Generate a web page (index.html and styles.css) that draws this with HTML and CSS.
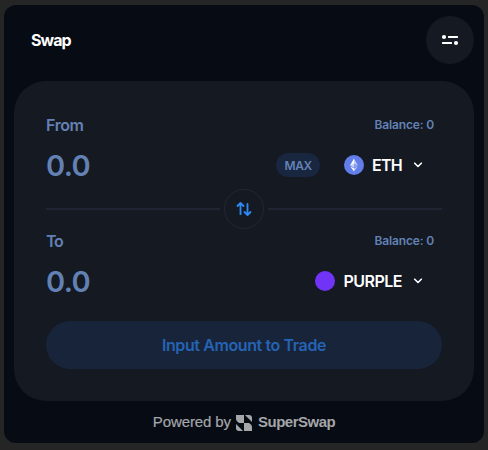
FILE: index.html
```html
<!DOCTYPE html>
<html lang="en">
<head>
    <meta charset="UTF-8">
    <meta name="viewport" content="width=device-width, initial-scale=1.0">
    <title>Swap</title>
    <link rel="stylesheet" href="styles.css">
</head>
<body>
    <div class="widget">
        <div class="header">
            <h1>Swap</h1>
            <button class="settings" aria-label="Settings">
                <svg width="18" height="12" viewBox="0 0 18 12" fill="#fff">
                    <circle cx="3" cy="3" r="2.1"/>
                    <rect x="7" y="2" width="10" height="2" rx="0.5"/>
                    <rect x="1" y="8" width="10" height="2" rx="0.5"/>
                    <circle cx="15" cy="9" r="2.1"/>
                </svg>
            </button>
        </div>

        <div class="panel">
            <div class="label-row">
                <span class="label">From</span>
                <span class="balance">Balance: 0</span>
            </div>
            <div class="amount-row">
                <span class="amount">0.0</span>
                <button class="max">MAX</button>
                <button class="token">
                    <svg class="token-icon" width="20" height="20" viewBox="0 0 20 20">
                        <circle cx="10" cy="10" r="10" fill="#627eea"/>
                        <path d="M10 3.6L6.2 10.2L10 12.4Z" fill="#fff"/>
                        <path d="M10 3.6L13.8 10.2L10 12.4Z" fill="#c3cef8"/>
                        <path d="M10 8.4L6.2 10.2L10 12.4Z" fill="#c3cef8"/>
                        <path d="M10 8.4L13.8 10.2L10 12.4Z" fill="#8a9ff0"/>
                        <path d="M6.2 11.2L10 13.4V16.5Z" fill="#fff"/>
                        <path d="M13.8 11.2L10 13.4V16.5Z" fill="#c3cef8"/>
                    </svg>
                    <span class="token-name eth">ETH</span>
                    <svg class="chevron" width="10" height="8" viewBox="0 0 10 8">
                        <path d="M1.7 2.2L5 5.5L8.3 2.2"/>
                    </svg>
                </button>
            </div>

            <div class="divider">
                <button class="switch" aria-label="Switch tokens">
                    <svg width="16" height="16" viewBox="0 0 16 16">
                        <path d="M4.5 13.2V2.4M1.5 5L4.5 2L7.5 5"/>
                        <path d="M11.5 3V13.6M8.5 11L11.5 14L14.5 11"/>
                    </svg>
                </button>
            </div>

            <div class="label-row">
                <span class="label to">To</span>
                <span class="balance">Balance: 0</span>
            </div>
            <div class="amount-row">
                <span class="amount">0.0</span>
                <button class="token">
                    <span class="token-icon purple"></span>
                    <span class="token-name">PURPLE</span>
                    <svg class="chevron" width="10" height="8" viewBox="0 0 10 8">
                        <path d="M1.7 2.2L5 5.5L8.3 2.2"/>
                    </svg>
                </button>
            </div>

            <button class="submit">Input Amount to Trade</button>
        </div>

        <div class="footer">
            <span class="powered">Powered by</span>
            <svg width="16" height="16" viewBox="0 0 16 16" fill="#a5a6a9">
                <path d="M0 0H8V8H3Q0 6.5 0 4Z"/>
                <path d="M9 0H13Q16 0 16 3V7Z"/>
                <path d="M8 8H13Q16 9.5 16 12V16H8Z"/>
                <path d="M0 9L7 16H3Q0 16 0 13Z"/>
            </svg>
            <span class="brand">SuperSwap</span>
        </div>
    </div>
</body>
</html>
```

FILE: styles.css
```css
* {
    box-sizing: border-box;
}
body {
    margin: 0;
    padding: 5px 4px 7px;
    background-color: #252525;
    font-family: Inter, "Liberation Sans", sans-serif;
    color: #fff;
}
button {
    display: flex;
    align-items: center;
    justify-content: center;
    padding: 0;
    border: none;
    background: none;
    color: inherit;
    font-family: inherit;
    cursor: pointer;
}
svg {
    display: block;
    flex: none;
}
.widget {
    height: 438px;
    padding: 11px 10px 0;
    border-radius: 12px;
    background-color: #070b14;
}
.header {
    display: flex;
    align-items: center;
    justify-content: space-between;
    padding-left: 17px;
    margin-bottom: 17px;
}
h1 {
    margin: 0;
    font-size: 16px;
    font-weight: 700;
    letter-spacing: -0.95px;
}
.settings {
    width: 48px;
    height: 48px;
    border-radius: 50%;
    background-color: #141922;
}
.panel {
    height: 320px;
    padding: 32px;
    border-radius: 32px;
    background-color: #141922;
}
.label-row {
    display: flex;
    align-items: center;
    justify-content: space-between;
    height: 24px;
    padding-right: 8px;
    margin-bottom: 8px;
    color: #6381b4;
}
.label {
    font-size: 16px;
    font-weight: 600;
    letter-spacing: -0.4px;
}
.to {
    letter-spacing: -1.4px;
}
.balance {
    padding-bottom: 2px;
    font-size: 12px;
    font-weight: 600;
    letter-spacing: -0.15px;
}
.amount-row {
    display: flex;
    align-items: center;
    height: 40px;
    padding-right: 19px;
}
.amount {
    flex: 1;
    padding-top: 1px;
    color: #6381b4;
    font-size: 29px;
    font-weight: 600;
    letter-spacing: -0.6px;
}
.max {
    width: 44px;
    height: 24px;
    margin-right: 24px;
    border-radius: 12px;
    background-color: #182640;
    color: #6381b4;
    font-size: 12px;
    font-weight: 600;
    letter-spacing: -0.5px;
}
.token-icon {
    width: 20px;
    height: 20px;
    margin-right: 8px;
}
.purple {
    border-radius: 50%;
    background-color: #7133f6;
}
.token-name {
    margin-right: 11px;
    font-size: 16px;
    font-weight: 600;
    letter-spacing: -0.5px;
}
.eth {
    letter-spacing: -0.75px;
}
.chevron {
    fill: none;
    stroke: #fff;
    stroke-width: 1.6;
    stroke-linecap: round;
    stroke-linejoin: round;
}
.divider {
    display: flex;
    align-items: center;
    gap: 4px;
    margin-top: 4px;
}
.divider::before,
.divider::after {
    content: "";
    flex: 1;
    height: 2px;
    background-color: #1f2532;
}
.switch {
    width: 40px;
    height: 40px;
    border: 1px solid #222834;
    border-radius: 50%;
}
.switch svg {
    fill: none;
    stroke: #2e8af7;
    stroke-width: 1.8;
    stroke-linecap: round;
    stroke-linejoin: round;
}
.submit {
    width: 100%;
    height: 48px;
    margin-top: 20px;
    border-radius: 24px;
    background-color: #182439;
    color: #2563b4;
    font-size: 16px;
    font-weight: 600;
    letter-spacing: -0.4px;
}
.footer {
    display: flex;
    align-items: center;
    justify-content: center;
    height: 42px;
    color: #a5a6a9;
    font-family: "Liberation Sans", Arial, sans-serif;
    font-size: 15px;
}
.footer svg {
    margin: 2px 6px 0 5px;
}
.powered {
    letter-spacing: -0.1px;
    -webkit-text-stroke: 0.2px #a5a6a9;
}
.brand {
    font-weight: bold;
    letter-spacing: -0.5px;
}
.powered,
.brand {
    padding-bottom: 1px;
}
```
